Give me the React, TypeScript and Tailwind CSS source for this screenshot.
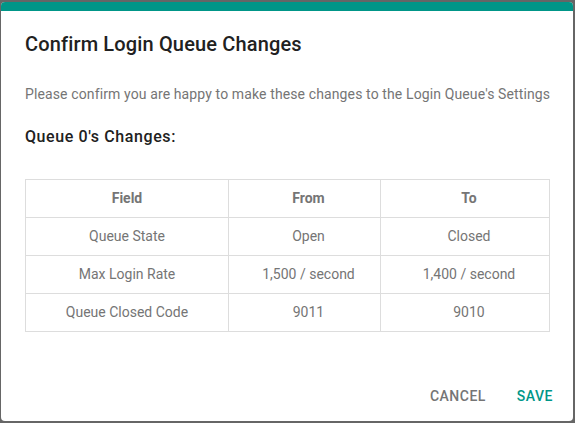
const rows = [
  { field: "Queue State", from: "Open", to: "Closed" },
  { field: "Max Login Rate", from: "1,500 / second", to: "1,400 / second" },
  { field: "Queue Closed Code", from: "9011", to: "9010" },
];

export default function App() {
  return (
    <div
      className="h-[423px] w-[575px] bg-[#666666] pl-px pt-[2px]"
      style={{ fontFamily: "Roboto, 'Noto Sans', sans-serif" }}
    >
      <div className="flex h-[419px] w-[572px] flex-col overflow-hidden rounded-[4px] bg-white">
        <div className="h-[9px] bg-[#009688]" />
        <div className="px-6 pt-[19px]">
          <h2 className="text-[20px] font-medium leading-[28px] tracking-[0.15px] text-[#212121]">
            Confirm Login Queue Changes
          </h2>
          <p className="mt-[26px] whitespace-nowrap text-[14px] leading-[20px] tracking-[0.12px] text-[#757575]">
            Please confirm you are happy to make these changes to the Login Queue's Settings
          </p>
          <h3 className="mt-[21px] text-[16px] font-medium leading-[24px] tracking-[0.6px] text-[#212121]">
            Queue 0's Changes:
          </h3>
          <table className="mt-[30px] w-[525px] border-collapse text-center text-[14px] text-[#757575]">
            <thead>
              <tr className="h-[38px]">
                <th className="w-[203px] border border-[#dddddd] font-bold">Field</th>
                <th className="w-[152px] border border-[#dddddd] pl-2 font-bold">From</th>
                <th className="border border-[#dddddd] pl-2 font-bold">To</th>
              </tr>
            </thead>
            <tbody>
              {rows.map((r) => (
                <tr key={r.field} className="h-[38px]">
                  <td className="border border-[#dddddd]">{r.field}</td>
                  <td className="border border-[#dddddd] pl-2">{r.from}</td>
                  <td className="border border-[#dddddd] pl-2">{r.to}</td>
                </tr>
              ))}
            </tbody>
          </table>
        </div>
        <div className="mt-auto flex justify-end gap-[15px] pb-[7px] pr-[12px]">
          <button className="h-[36px] px-2 text-[14px] font-medium uppercase tracking-[0.5px] text-[#757575]">
            Cancel
          </button>
          <button className="h-[36px] px-2 text-[14px] font-medium uppercase tracking-[0.5px] text-[#009688]">
            Save
          </button>
        </div>
      </div>
    </div>
  );
}
